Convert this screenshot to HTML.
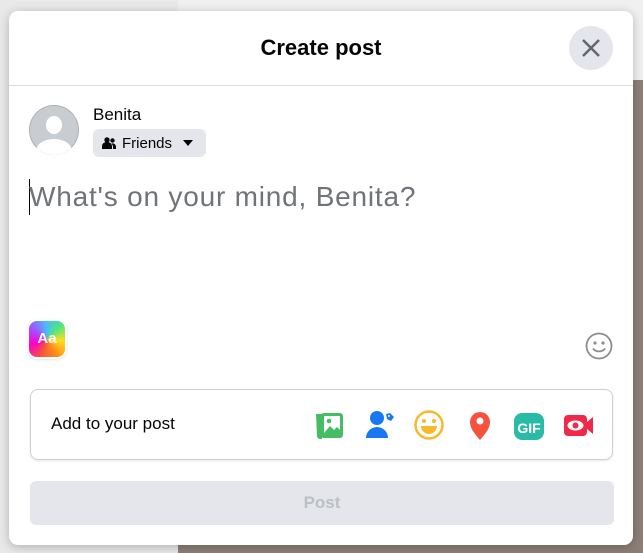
<!DOCTYPE html><html><head><style>
body{margin:0;width:643px;height:553px;overflow:hidden;background:#e9e9ea;font-family:"Liberation Sans",sans-serif;position:relative}
.bgr{position:absolute;left:178px;top:80px;width:465px;height:473px;background:#8d7f78}
.bgt{position:absolute;left:178px;top:0;width:465px;height:80px;background:#f0f0f0}
.m{position:absolute;left:9px;top:11px;width:624px;height:534px;background:#fff;border-radius:9px;box-shadow:0 2px 10px rgba(0,0,0,.25)}
.t{position:absolute;left:0;right:0;top:24px;text-align:center;font-weight:bold;font-size:22px;color:#050505}
.hr{position:absolute;left:0;right:0;top:74px;height:1px;background:#dadde1}
.x{position:absolute;left:560px;top:15px;width:44px;height:44px;border-radius:50%;background:#e4e6eb}
.av{position:absolute;left:20px;top:94px;width:50px;height:50px;border-radius:50%;background:#c9ccd1;overflow:hidden;box-shadow:inset 0 0 0 1px #b0b3b8}
.nm{position:absolute;left:84px;top:94px;font-size:17px;color:#050505}
.fr{position:absolute;left:84px;top:118px;width:113px;height:28px;border-radius:6px;background:#e4e6eb;font-size:15px;color:#050505}
.ph{position:absolute;left:20px;top:170px;font-size:28px;letter-spacing:0.8px;color:#707378}
.cur{position:absolute;left:20px;top:168px;width:1px;height:36px;background:#050505}
.aa{position:absolute;left:20px;top:310px;width:36px;height:36px;border-radius:8px;background:conic-gradient(from 200deg,#f5533d,#f0c,#a64dff,#4db8ff,#4de680,#ffe01a,#ff8c1a,#f5533d);box-shadow:0 0 0 2px #fff,0 1px 4px rgba(0,0,0,.3);color:#fff;font-weight:bold;font-size:15px;text-align:center;line-height:36px}
.box{position:absolute;left:21px;top:378px;width:581px;height:69px;border:1px solid #ced0d4;border-radius:8px;box-shadow:0 1px 2px rgba(0,0,0,.1)}
.box span{position:absolute;left:20px;top:24px;font-size:17px;color:#050505}
.post{position:absolute;left:21px;top:470px;width:584px;height:44px;border-radius:6px;background:#e4e6eb;color:#bcc0c4;font-weight:bold;font-size:17px;text-align:center;line-height:44px}
</style></head><body>
<div class="bgt"></div><div class="bgr"></div>
<div class="m">
<div class="t">Create post</div>
<div class="x"><svg width="44" height="44"><path d="M14 14L30 30M30 14L14 30" stroke="#606770" stroke-width="2.5"/></svg></div>
<div class="hr"></div>
<div class="av"><svg width="50" height="50"><ellipse cx="25" cy="20" rx="8" ry="9" fill="#fff"/><ellipse cx="25" cy="46" rx="18" ry="12" fill="#fff"/></svg></div>
<div class="nm">Benita</div>
<div class="fr"><svg style="position:absolute;left:9px;top:8px" width="14" height="12"><circle cx="5" cy="3" r="2.7" fill="#050505"/><path d="M0 12v-3a5 4 0 0 1 10 0v3z" fill="#050505"/><circle cx="10.5" cy="3.5" r="2.2" fill="#050505"/><path d="M11 12h3v-2a3.5 3.5 0 0 0-4.5-3.5 6 6 0 0 1 1.5 3z" fill="#050505"/></svg><span style="position:absolute;left:29px;top:6px">Friends</span><svg style="position:absolute;left:90px;top:11px" width="10" height="6"><path d="M0 0h10L5 6z" fill="#050505"/></svg></div>
<div class="cur"></div>
<div class="ph">What's on your mind, Benita?</div>
<div class="aa">Aa</div>
<svg style="position:absolute;left:576px;top:321px" width="28" height="28"><circle cx="14" cy="14" r="12.5" fill="none" stroke="#8a8d91" stroke-width="1.8"/><circle cx="10" cy="11" r="1.6" fill="#8a8d91"/><circle cx="18" cy="11" r="1.6" fill="#8a8d91"/><path d="M8 16.5a7 6 0 0 0 12 0" fill="none" stroke="#8a8d91" stroke-width="1.8"/></svg>
<div class="box"><span>Add to your post</span>
<svg style="position:absolute;left:282px;top:20px" width="32" height="32"><path d="M3 4h6v25H7a3 3 0 0 1-3-3z" fill="#45bd62"/><rect x="8" y="3" width="22" height="25" rx="3" fill="#45bd62"/><rect x="11" y="6" width="16" height="17" fill="#fff"/><circle cx="16" cy="11" r="2.3" fill="#45bd62"/><path d="M11 23l6-7 4 4 3-3 3 3v3z" fill="#45bd62"/></svg>
<svg style="position:absolute;left:333px;top:19px" width="32" height="32"><circle cx="13" cy="9" r="7" fill="#1877f2"/><path d="M2 29a11 11 0 0 1 22 0z" fill="#1877f2"/><path d="M22 5l4-1 4 4-3 4-4-2z" fill="#1877f2"/><circle cx="25" cy="7" r="1" fill="#fff"/></svg>
<svg style="position:absolute;left:382px;top:19px" width="32" height="32"><circle cx="16" cy="16" r="13.5" fill="none" stroke="#f7b928" stroke-width="2.5"/><circle cx="11" cy="12" r="2" fill="#f7b928"/><circle cx="21" cy="12" r="2" fill="#f7b928"/><path d="M8 17h16a8 8 0 0 1-16 0z" fill="#f7b928"/></svg>
<svg style="position:absolute;left:433px;top:19px" width="32" height="32"><path d="M16 31C10 24 6 19 6 13a10 10 0 0 1 20 0c0 6-4 11-10 18z" fill="#f5533d"/><circle cx="16" cy="12" r="3.5" fill="#fff"/></svg>
<svg style="position:absolute;left:482px;top:20px" width="32" height="32"><rect x="1" y="3" width="30" height="27" rx="8" fill="#2abba7"/><text x="16" y="23" text-anchor="middle" font-family="Liberation Sans" font-weight="bold" font-size="14" fill="#fff">GIF</text></svg>
<svg style="position:absolute;left:532px;top:20px" width="32" height="32"><rect x="1" y="5" width="23" height="21" rx="4" fill="#f02849"/><path d="M24 12l6-5v17l-6-5z" fill="#f02849"/><ellipse cx="12.5" cy="15.5" rx="8" ry="5" fill="#fff"/><circle cx="12.5" cy="15.5" r="3" fill="#f02849"/></svg>
</div>
<div class="post">Post</div>
</div>
</body></html>
